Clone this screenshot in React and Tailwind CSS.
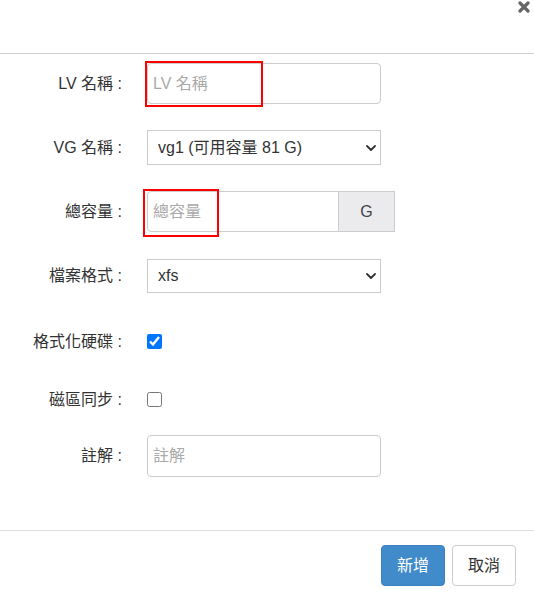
import { useState } from "react";

const font = { fontFamily: '"Liberation Sans", "Noto Sans CJK TC", sans-serif' };

function Chevron() {
    return (
        <svg className="absolute right-[5px] top-1/2 -translate-y-1/2 pointer-events-none" width="10" height="6" viewBox="0 0 10 6">
            <path d="M1 1 L5 5 L9 1" fill="none" stroke="#333" strokeWidth="1.8" strokeLinecap="round" strokeLinejoin="round" />
        </svg>
    );
}

function Row({ label, className = "", children }) {
    return (
        <div className={`flex items-center ${className}`}>
            <label className="w-[122px] shrink-0 text-right text-[16px] text-[#333] whitespace-nowrap">{label}</label>
            <div className="ml-[25px] flex items-center">{children}</div>
        </div>
    );
}

export default function App() {
    const [format, setFormat] = useState(true);
    const [sync, setSync] = useState(false);

    return (
        <div className="w-[534px] h-[593px] bg-white overflow-hidden" style={font}>
            {/* header */}
            <div className="relative h-[54px] border-b border-[#d0d0d0]">
                <button className="absolute right-[4px] top-[1px] w-[12px] h-[12px] flex items-center justify-center">
                    <svg width="12" height="12" viewBox="0 0 12 12">
                        <path d="M2 2 L10 10 M10 2 L2 10" stroke="#666" strokeWidth="3.2" strokeLinecap="round" />
                    </svg>
                </button>
            </div>

            {/* body */}
            <div className="flex flex-col pt-[9px] pb-[53px] border-b border-[#ddd]">
                <Row label="LV 名稱 :">
                    <div className="relative">
                        <input
                            placeholder="LV 名稱"
                            className="w-[234px] h-[41px] border border-[#ccc] rounded-[4px] pl-[5px] text-[16px] text-[#555] placeholder:text-[#aaa] outline-none"
                        />
                        <div className="absolute left-[-2px] top-[-2px] w-[118px] h-[46px] border-2 border-[#ff0000] pointer-events-none" />
                    </div>
                </Row>

                <Row label="VG 名稱 :" className="mt-[26px]">
                    <div className="relative">
                        <select className="appearance-none w-[234px] h-[35px] border border-[#ccc] bg-white pl-[10px] text-[16px] text-[#333] outline-none">
                            <option>vg1 (可用容量 81 G)</option>
                        </select>
                        <Chevron />
                    </div>
                </Row>

                <Row label="總容量 :" className="mt-[26px]">
                    <div className="relative flex">
                        <input
                            placeholder="總容量"
                            className="w-[192px] h-[41px] border border-[#ccc] rounded-l-[4px] pl-[5px] text-[16px] text-[#555] placeholder:text-[#aaa] outline-none"
                        />
                        <span className="w-[56px] h-[41px] flex items-center justify-center border border-l-0 border-[#ccc] bg-[#ebebed] text-[16px] text-[#444]">
                            G
                        </span>
                        <div className="absolute left-[-4px] top-[-2px] w-[76px] h-[48px] border-2 border-[#ff0000] pointer-events-none" />
                    </div>
                </Row>

                <Row label="檔案格式 :" className="mt-[27px]">
                    <div className="relative">
                        <select className="appearance-none w-[234px] h-[34px] border border-[#ccc] bg-white pl-[10px] text-[16px] text-[#333] outline-none">
                            <option>xfs</option>
                            <option>ext4</option>
                        </select>
                        <Chevron />
                    </div>
                </Row>

                <Row label="格式化硬碟 :" className="mt-[38px] h-[21px]">
                    <input
                        type="checkbox"
                        checked={format}
                        onChange={(e) => setFormat(e.target.checked)}
                        className="m-0 w-[15px] h-[15px]"
                    />
                </Row>

                <Row label="磁區同步 :" className="mt-[37px] h-[21px]">
                    <input
                        type="checkbox"
                        checked={sync}
                        onChange={(e) => setSync(e.target.checked)}
                        className="m-0 w-[15px] h-[15px]"
                    />
                </Row>

                <Row label="註解 :" className="mt-[25px]">
                    <input
                        placeholder="註解"
                        className="w-[234px] h-[42px] border border-[#ccc] rounded-[4px] pl-[5px] text-[16px] text-[#555] placeholder:text-[#aaa] outline-none"
                    />
                </Row>
            </div>

            {/* footer */}
            <div className="flex justify-end gap-[7px] pt-[14px] pr-[18px]">
                <button className="w-[64px] h-[41px] rounded-[4px] bg-[#428bca] border border-[#3a80bd] text-white text-[16px]">
                    新增
                </button>
                <button className="w-[64px] h-[41px] rounded-[4px] bg-white border border-[#ccc] text-[#333] text-[16px]">
                    取消
                </button>
            </div>
        </div>
    );
}
